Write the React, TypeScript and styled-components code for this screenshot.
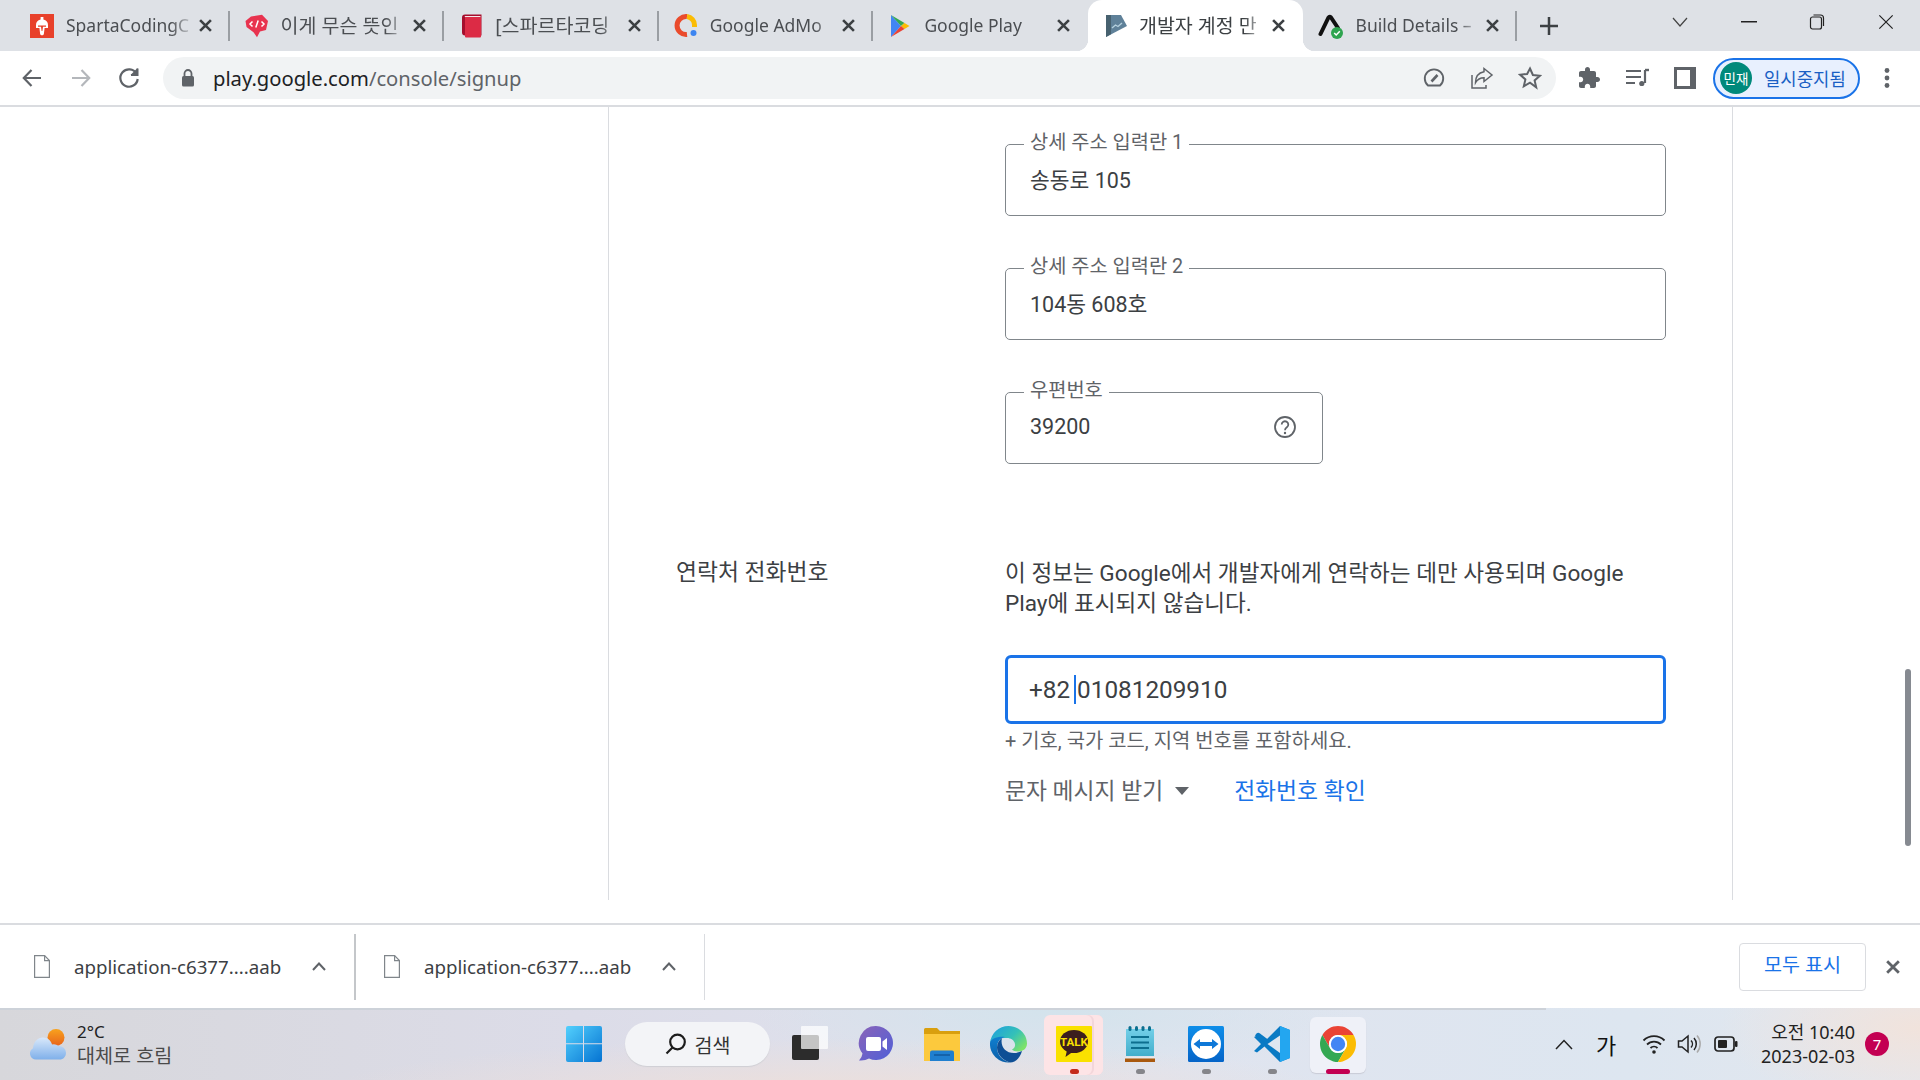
import React from "react";
import styled, { createGlobalStyle } from "styled-components";

const UI_FONT = `"Noto Sans", "Noto Sans CJK KR", sans-serif`;
const PAGE_FONT = `Roboto, "Noto Sans CJK KR", sans-serif`;

const colors = {
  strip: "#dee1e6",
  omni: "#f1f3f4",
  icon: "#5f6368",
  text: "#3c4043",
  line: "#dadce0",
  outline: "#80868b",
  blue: "#1a73e8",
};

const GlobalStyle = createGlobalStyle`
  html, body {
    margin: 0;
    padding: 0;
    background: #fff;
    overflow: hidden;
  }
  * {
    box-sizing: border-box;
  }
  svg {
    display: block;
    flex: none;
  }
`;

const Screen = styled.div`
  display: flex;
  flex-direction: column;
  width: 1920px;
  height: 1080px;
  overflow: hidden;
`;

/* tab strip */
const TabStrip = styled.div`
  display: flex;
  flex: 0 0 51px;
  padding-left: 15px;
  background: ${colors.strip};
`;

const Tab = styled.div<{ $active?: boolean }>`
  position: relative;
  display: flex;
  flex: 0 0 214.6px;
  align-items: center;
  gap: 12px;
  min-width: 0;
  padding: 0 18px 0 15px;
  background: ${(p) => (p.$active ? "#fff" : "transparent")};
  border-radius: ${(p) => (p.$active ? "14px 14px 0 0" : "0")};

  ${(p) =>
    p.$active
      ? `
    &::before, &::after {
      content: "";
      position: absolute;
      bottom: 0;
      width: 12px;
      height: 12px;
    }
    &::before {
      left: -12px;
      background: radial-gradient(circle at 0 0, transparent 12px, #fff 12.5px);
    }
    &::after {
      right: -12px;
      background: radial-gradient(circle at 100% 0, transparent 12px, #fff 12.5px);
    }
  `
      : ""}
`;

const TabSeparator = styled.span`
  position: absolute;
  top: 11px;
  right: 0;
  width: 2px;
  height: 30px;
  background: #9a9ea3;
`;

const TabTitle = styled.span<{ $active?: boolean; $korean?: boolean }>`
  flex: 1;
  min-width: 0;
  margin: -2px -4px 0 0;
  font-family: ${UI_FONT};
  font-size: ${(p) => (p.$korean ? 19.5 : 17.5)}px;
  white-space: nowrap;
  color: ${(p) => (p.$active ? "#3c4043" : "#4b4e52")};
  -webkit-mask-image: linear-gradient(to right, #000 84%, rgba(0, 0, 0, 0.15) 100%);
  mask-image: linear-gradient(to right, #000 84%, rgba(0, 0, 0, 0.15) 100%);
`;

const NewTab = styled.div`
  display: flex;
  align-items: center;
  justify-content: center;
  width: 64px;
  height: 51px;
`;

const WindowControls = styled.div`
  display: flex;
  margin-left: auto;
`;

const WindowButton = styled.div`
  display: flex;
  align-items: center;
  justify-content: center;
  width: 68.5px;
  height: 44px;
`;

/* toolbar */
const Toolbar = styled.div`
  display: flex;
  flex: 0 0 56px;
  align-items: center;
  padding: 0 0 0 8px;
  background: #fff;
  border-bottom: 2px solid ${colors.line};
`;

const ToolButton = styled.div<{ $gap?: number }>`
  display: flex;
  align-items: center;
  justify-content: center;
  width: 48px;
  height: 42px;
  margin-left: ${(p) => p.$gap ?? 0}px;
`;

const Omnibox = styled.div`
  display: flex;
  flex: 0 0 1393px;
  align-items: center;
  height: 42px;
  margin-left: 10px;
  padding: 0 2px 0 16px;
  background: ${colors.omni};
  border-radius: 21px;
`;

const Url = styled.div`
  flex: 1;
  margin-left: 16px;
  font-family: ${UI_FONT};
  font-size: 20.2px;
  color: ${colors.icon};
  b {
    font-weight: 400;
    color: #202124;
  }
`;

const ProfilePill = styled.div`
  display: flex;
  align-items: center;
  width: 147px;
  height: 41px;
  margin-left: 4px;
  padding-left: 5px;
  background: #e8f0fe;
  border: 2px solid ${colors.blue};
  border-radius: 21px;
`;

const Avatar = styled.div`
  display: flex;
  align-items: center;
  justify-content: center;
  width: 32px;
  height: 32px;
  border-radius: 50%;
  background: #00897b;
  color: #fff;
  font-family: ${UI_FONT};
  font-size: 13.5px;
  white-space: nowrap;
`;

const ProfileLabel = styled.span`
  margin-left: 12px;
  font-family: ${UI_FONT};
  font-size: 17.8px;
  white-space: nowrap;
  color: #1a5fc4;
`;

/* page */
const Content = styled.div`
  position: relative;
  display: grid;
  flex: 1;
  grid-template-columns: 608px 1125px 1fr;
  min-height: 0;
  padding-bottom: 23px;
  background: #fff;
`;

const Panel = styled.div`
  grid-column: 2;
  padding: 37px 0 0 67px;
  border-left: 1px solid ${colors.line};
  border-right: 1px solid ${colors.line};
  font-family: ${PAGE_FONT};
`;

const AddressColumn = styled.div`
  display: flex;
  flex-direction: column;
  gap: 52px;
  margin-left: 329px;
  width: 661px;
`;

const OutlinedField = styled.div<{ $width?: number }>`
  position: relative;
  display: flex;
  align-items: center;
  justify-content: space-between;
  width: ${(p) => (p.$width ? `${p.$width}px` : "100%")};
  height: 72px;
  padding: 0 25px 3px 24px;
  border: 1px solid ${colors.outline};
  border-radius: 5px;
`;

const FloatingLabel = styled.span`
  position: absolute;
  top: -14px;
  left: 18px;
  padding: 0 6px;
  background: #fff;
  font-size: 19.8px;
  line-height: 24px;
  color: ${colors.icon};
  white-space: nowrap;
`;

const FieldValue = styled.span`
  font-size: 21.5px;
  color: ${colors.text};
  white-space: nowrap;
`;

const ContactRow = styled.div`
  display: grid;
  grid-template-columns: 329px 661px;
  margin-top: 94px;
`;

const ContactLabel = styled.div`
  font-size: 22.8px;
  line-height: 30px;
  color: ${colors.text};
`;

const Description = styled.p`
  margin: 0 0 36px;
  padding-top: 1px;
  font-size: 22.6px;
  line-height: 30px;
  color: ${colors.text};
  white-space: nowrap;
`;

const PhoneField = styled.div`
  display: flex;
  align-items: center;
  height: 69px;
  padding-left: 21px;
  border: 3.5px solid ${colors.blue};
  border-radius: 6px;
  font-size: 24.3px;
  color: ${colors.text};
`;

const Caret = styled.span`
  display: inline-block;
  width: 2px;
  height: 29px;
  margin: 0 1px 0 4px;
  background: ${colors.blue};
`;

const Hint = styled.div`
  margin-top: 6px;
  font-size: 19.9px;
  line-height: 24px;
  color: ${colors.icon};
`;

const Actions = styled.div`
  display: flex;
  align-items: center;
  height: 30px;
  margin-top: 20px;
  font-size: 22.8px;
`;

const SmsSelect = styled.span`
  display: flex;
  align-items: center;
  gap: 12px;
  color: ${colors.icon};

  svg {
    margin-top: 3px;
  }
`;

const VerifyLink = styled.a`
  margin-left: 45px;
  color: ${colors.blue};
`;

const ScrollThumb = styled.div`
  position: absolute;
  top: 562px;
  right: 9px;
  width: 6px;
  height: 177px;
  border-radius: 3px;
  background: #868a91;
`;

/* download shelf */
const Shelf = styled.div`
  display: flex;
  flex: 0 0 85px;
  align-items: center;
  background: #fff;
  border-top: 2px solid ${colors.line};
`;

const DownloadItem = styled.div<{ $width: number; $strong?: boolean }>`
  display: flex;
  align-items: center;
  width: ${(p) => p.$width}px;
  height: 66px;
  padding-left: ${(p) => (p.$strong ? 34 : 28)}px;
  border-right: ${(p) => (p.$strong ? 2 : 1)}px solid ${(p) => (p.$strong ? "#c4c7ca" : colors.line)};
`;

const FileName = styled.span`
  flex: 1;
  margin-left: 24px;
  font-family: ${UI_FONT};
  font-size: 18.7px;
  color: ${colors.text};
  white-space: nowrap;
`;

const ItemCaret = styled.span`
  margin-right: 28px;
`;

const ShowAll = styled.button`
  display: flex;
  align-items: center;
  justify-content: center;
  width: 127px;
  height: 48px;
  margin-left: auto;
  padding: 0 0 6px;
  background: #fff;
  border: 1.5px solid ${colors.line};
  border-radius: 4px;
  font-family: ${UI_FONT};
  font-size: 19.6px;
  color: ${colors.blue};
`;

const ShelfClose = styled.div`
  display: flex;
  align-items: center;
  justify-content: center;
  width: 54px;
`;

/* taskbar */
const Taskbar = styled.div`
  position: relative;
  display: flex;
  flex: 0 0 72px;
  align-items: center;
  padding-right: 31px;
  background:
    radial-gradient(ellipse 520px 60px at 830px 90px, #eedfd9 0%, rgba(238, 223, 217, 0) 100%),
    radial-gradient(ellipse 300px 70px at 1050px 0, #d3e3ec 0%, rgba(211, 227, 236, 0) 100%),
    radial-gradient(ellipse 200px 80px at 1920px 20px, #f1e3dc 0%, rgba(241, 227, 220, 0) 100%),
    linear-gradient(to right, #d7d7db 0%, #dcdce8 30%, #e0e4ef 60%, #dde6f0 85%, #e3e7ee 100%);

  &::before {
    content: "";
    position: absolute;
    top: 0;
    left: 0;
    width: 1546px;
    height: 2px;
    background: #cdd2d9;
  }
`;

const Weather = styled.div`
  display: flex;
  flex: 0 0 551px;
  align-items: center;
  gap: 11px;
  padding-left: 30px;
`;

const WeatherText = styled.div`
  font-family: ${UI_FONT};
  font-size: 19.6px;
  line-height: 24px;
  color: #4a4a4a;
  white-space: nowrap;
  strong {
    display: block;
    font-size: 17px;
    font-weight: 400;
    color: #222;
  }
`;

const TaskSlot = styled.div<{ $tone?: "kakao" | "chrome" }>`
  position: relative;
  display: flex;
  flex: 0 0 66px;
  align-items: center;
  justify-content: center;
  height: 72px;

  ${(p) =>
    p.$tone === "kakao"
      ? `
    &::before {
      content: "";
      position: absolute;
      top: 7px;
      left: 3px;
      width: 59px;
      height: 60px;
      border-radius: 6px;
      background: #fde4e6;
      box-shadow: inset -9px 0 0 #fde4e6, inset -11px 0 0 #f3d6da;
    }
  `
      : ""}
  ${(p) =>
    p.$tone === "chrome"
      ? `
    &::before {
      content: "";
      position: absolute;
      top: 9px;
      left: 5px;
      width: 56px;
      height: 56px;
      border-radius: 6px;
      background: #eff1f8;
      box-shadow: 0 1px 1px #c9cbd6;
    }
  `
      : ""}

  svg {
    position: relative;
  }
`;

const RunDot = styled.span<{ $color: string; $wide?: boolean }>`
  position: absolute;
  left: 50%;
  bottom: 6px;
  width: ${(p) => (p.$wide ? 24 : 9)}px;
  height: 5px;
  margin-left: ${(p) => (p.$wide ? -12 : -4)}px;
  border-radius: 3px;
  background: ${(p) => p.$color};
`;

const SearchPill = styled.div`
  display: flex;
  flex: 0 0 145px;
  align-items: center;
  justify-content: center;
  gap: 8px;
  height: 44px;
  margin: 0 7px 0 8px;
  border-radius: 22px;
  background: #f3f4f7;
  box-shadow: 0 1px 1px #cfcfd4;
  font-family: ${UI_FONT};
  font-size: 19.5px;
  color: #333;
`;

const Tray = styled.div`
  display: flex;
  align-items: center;
  margin-left: auto;
`;

const TraySlot = styled.div<{ $width: number; $offset?: number }>`
  display: flex;
  align-items: center;
  justify-content: center;
  width: ${(p) => p.$width}px;
  margin-left: ${(p) => p.$offset ?? 0}px;
`;

const ImeGlyph = styled.span`
  font-family: "Noto Sans CJK KR", sans-serif;
  font-size: 22px;
  color: #111;
`;

const Clock = styled.div`
  width: 110px;
  font-family: ${UI_FONT};
  font-size: 18px;
  line-height: 24px;
  text-align: right;
  color: #222;
  white-space: nowrap;
`;

const Badge = styled.div`
  display: flex;
  align-items: center;
  justify-content: center;
  width: 24px;
  height: 24px;
  margin-left: 10px;
  border-radius: 50%;
  background: #c30052;
  color: #fff;
  font-family: ${UI_FONT};
  font-size: 15px;
`;

/* icons */
const CloseIcon = ({ size = 13, color = "#3c4043", width = 2.4 }: { size?: number; color?: string; width?: number }) => (
  <svg width={size} height={size} viewBox="0 0 12 12">
    <path d="M1 1l10 10M11 1L1 11" stroke={color} strokeWidth={width} fill="none" />
  </svg>
);

const SpartaIcon = () => (
  <svg width="24" height="24" viewBox="0 0 24 24">
    <rect width="24" height="24" fill="#e8412b" />
    <path d="M10.6 3h2.8v2.6c3 .5 4.6 2.7 4.6 5.4v3h-3.4l-.8 6.6-1.8 1-1.8-1-.8-6.6H6v-3c0-2.700 1.600-4.900 4.600-5.400z" fill="#fff" />
    <path d="M8 11.500h8v1.300h-3l-.6 4.200h-.8l-.6-4.200H8z" fill="#e8412b" />
  </svg>
);

const BubbleIcon = () => (
  <svg width="24" height="24" viewBox="0 0 24 24">
    <path d="M6 2.500L17 .8l6 6.200-2 9-6 1.500-3 5.700-3.500-5L1.500 13 .5 7z" fill="#e8334f" />
    <path d="M7.500 7.500L5 10l2.500 2.500M16.500 7.500L19 10l-2.500 2.500M13.200 6.500l-2.400 7" stroke="#fff" strokeWidth="1.500" fill="none" />
  </svg>
);

const BookIcon = () => (
  <svg width="24" height="24" viewBox="0 0 24 24">
    <path d="M3 3.500A3 3 0 0 1 6 .5h16.500v21H6a3 3 0 0 1-3-3z" fill="#a50e2d" />
    <path d="M5.500 2h16v1.500h-15z" fill="#fff" opacity=".9" />
    <rect x="6" y="3" width="16" height="20.500" rx="1" fill="#dc2b45" />
  </svg>
);

const AdMobIcon = () => (
  <svg width="24" height="24" viewBox="0 0 24 24" fill="none">
    <path d="M13 20.500A9 9 0 1 1 13 2.600" stroke="#ea4b2c" strokeWidth="5" />
    <path d="M13 2.600a8.500 8.500 0 0 1 7.500 8.500v2" stroke="#fbbc04" strokeWidth="5" />
    <circle cx="19.500" cy="19" r="3" fill="#3d85f0" />
  </svg>
);

const PlayIcon = () => (
  <svg width="24" height="24" viewBox="0 0 24 24">
    <path d="M3 1l10 11L3 23z" fill="#4285f4" />
    <path d="M3 1l13.500 8L13 12z" fill="#34a853" />
    <path d="M16.500 9l5 3-5 3L13 12z" fill="#fbbc04" />
    <path d="M3 23l10-11 3.500 3z" fill="#ea4335" />
  </svg>
);

const ConsoleIcon = () => (
  <svg width="24" height="24" viewBox="0 0 24 24">
    <path d="M3 1h15l6 11L3 23z" fill="#5f8199" />
    <path d="M3 1h5v19.200L3 23z" fill="#47616f" />
    <path d="M9 14l3.500-3 2.500 1.500 4-3.500" stroke="#b4cfdd" strokeWidth="1.400" fill="none" />
  </svg>
);

const ExpoIcon = () => (
  <svg width="26" height="26" viewBox="0 0 26 26">
    <path d="M2.500 21L10.500 4.500Q11.500 3 13 4.500L20 15" stroke="#111" strokeWidth="4" fill="none" strokeLinecap="round" />
    <circle cx="19" cy="20" r="6" fill="#2ea44f" />
    <path d="M16.200 20l2 2 3.600-3.800" stroke="#fff" strokeWidth="1.500" fill="none" />
  </svg>
);

const GaugeIcon = () => (
  <svg width="22" height="22" viewBox="0 0 22 22" fill="none" stroke="#5f6368" strokeWidth="1.900">
    <path d="M5 18.500a9.200 9.200 0 1 1 12 0z" />
    <path d="M8.500 14.500L14.500 8" strokeWidth="2.600" />
  </svg>
);

const ShareIcon = () => (
  <svg width="24" height="24" viewBox="0 0 24 24" fill="none" stroke="#5f6368" strokeWidth="1.500">
    <path d="M2 9v13h14v-3" />
    <path d="M14 2.500l8 6.500-8 6.500v-3.800c-4 0-6.500 1.500-8.500 5 0-6 3-10 8.500-11z" />
  </svg>
);

const StarIcon = () => (
  <svg width="24" height="24" viewBox="0 0 24 24" fill="none" stroke="#5f6368" strokeWidth="2">
    <path d="M12 2.500l2.900 6.500 7 .7-5.300 4.700 1.600 6.900L12 16.700l-6.200 3.600 1.600-6.900-5.300-4.700 7-.7z" />
  </svg>
);

const PuzzleIcon = () => (
  <svg width="24" height="24" viewBox="0 0 24 24">
    <path
      d="M20.500 11H19V7c0-1.100-.9-2-2-2h-4V3.500C13 2.120 11.880 1 10.500 1S8 2.120 8 3.500V5H4c-1.100 0-1.990.9-1.990 2v3.800H3.500c1.490 0 2.700 1.210 2.700 2.700s-1.210 2.700-2.700 2.700H2V20c0 1.100.9 2 2 2h3.800v-1.500c0-1.490 1.210-2.700 2.700-2.700 1.490 0 2.700 1.210 2.700 2.700V22H17c1.100 0 2-.9 2-2v-4h1.500c1.380 0 2.500-1.120 2.500-2.500S21.880 11 20.500 11z"
      fill="#5f6368"
    />
  </svg>
);

const QueueIcon = () => (
  <svg width="24" height="22" viewBox="0 0 24 22" fill="none" stroke="#5f6368" strokeWidth="2">
    <path d="M1 4h15M1 10h15M1 16h9" />
    <path d="M20 3v13" strokeWidth="2.200" />
    <path d="M20 3h4" strokeWidth="2.400" />
    <circle cx="16.800" cy="16.500" r="2.600" fill="#5f6368" stroke="none" />
  </svg>
);

const SidePanelIcon = () => (
  <svg width="22" height="22" viewBox="0 0 22 22">
    <rect width="22" height="22" fill="#5f6368" />
    <rect x="3" y="3" width="13" height="16" fill="#fff" />
  </svg>
);

const LockIcon = () => (
  <svg width="18" height="20" viewBox="0 0 18 20">
    <path d="M5.500 8V5.500a3.500 3.500 0 0 1 7 0V8" stroke="#5f6368" strokeWidth="1.800" fill="none" />
    <rect x="3" y="8" width="12" height="10.500" rx="1.500" fill="#5f6368" />
  </svg>
);

const DotsIcon = () => (
  <svg width="6" height="22" viewBox="0 0 6 22" fill="#5f6368">
    <circle cx="3" cy="3.500" r="2.400" />
    <circle cx="3" cy="11" r="2.400" />
    <circle cx="3" cy="18.500" r="2.400" />
  </svg>
);

const ArrowIcon = ({ flip, color }: { flip?: boolean; color: string }) => (
  <svg width="22" height="22" viewBox="0 0 22 22" fill="none" stroke={color} strokeWidth="2.200" style={flip ? { transform: "scaleX(-1)" } : undefined}>
    <path d="M20 11H3M10.500 3L2.800 11l7.700 8" />
  </svg>
);

const ReloadIcon = () => (
  <svg width="22" height="22" viewBox="0 0 22 22" fill="none" stroke="#5f6368" strokeWidth="2.200">
    <path d="M18.500 6.500A8.700 8.700 0 1 0 19.700 12" />
    <path d="M19.500 1v7h-7" fill="#5f6368" strokeWidth="0" />
    <path d="M19.500 1.500v6.500H13" strokeWidth="2" />
  </svg>
);

const HelpIcon = () => (
  <svg width="24" height="24" viewBox="0 0 24 24" fill="none" stroke="#5f6368" strokeWidth="1.800">
    <circle cx="12" cy="12" r="10" />
    <path d="M8.700 9.600a3.300 3.300 0 1 1 5.200 2.700c-1.200.9-1.900 1.400-1.900 2.900" />
    <circle cx="12" cy="18" r="1.200" fill="#5f6368" stroke="none" />
  </svg>
);

const FileIcon = () => (
  <svg width="16" height="23" viewBox="0 0 16 23" fill="#fff" stroke="#80868b" strokeWidth="1.200">
    <path d="M.6.6h10l4.800 5v16.800H.6z" />
    <path d="M10.600.6v5h4.800" fill="none" />
  </svg>
);

const ChevronUpIcon = () => (
  <svg width="14" height="9" viewBox="0 0 14 9" fill="none" stroke="#5f6368" strokeWidth="2">
    <path d="M1 8l6-6.500L13 8" />
  </svg>
);

const WinLogo = () => (
  <svg width="36" height="36" viewBox="0 0 36 36">
    <defs>
      <linearGradient id="win" x1="0" y1="0" x2="1" y2="1">
        <stop offset="0" stopColor="#53d0fd" />
        <stop offset="1" stopColor="#0573d2" />
      </linearGradient>
    </defs>
    <path d="M2 0h15v17.300H0V2a2 2 0 0 1 2-2zM18 0h16a2 2 0 0 1 2 2v15.300H18zM0 18.300h17V36H2a2 2 0 0 1-2-2zM18 18.300h18V34a2 2 0 0 1-2 2H18z" fill="url(#win)" />
  </svg>
);

const SearchIcon = () => (
  <svg width="22" height="22" viewBox="0 0 22 22" fill="none" stroke="#1c1c1c" strokeWidth="2.200">
    <circle cx="12.500" cy="9" r="7.300" />
    <path d="M7.500 14.500L1.500 20.500" />
  </svg>
);

const TaskViewIcon = () => (
  <svg width="36" height="36" viewBox="0 0 36 36">
    <rect x="0" y="9" width="27" height="25" rx="2" fill="#2c2c2c" />
    <rect x="9" y="0" width="27" height="23" rx="1" fill="#fff" opacity=".72" />
  </svg>
);

const TeamsIcon = () => (
  <svg width="36" height="36" viewBox="0 0 36 36">
    <defs>
      <linearGradient id="teams" x1="0" y1="0" x2="1" y2="1">
        <stop offset="0" stopColor="#8a63b8" />
        <stop offset="1" stopColor="#5060d8" />
      </linearGradient>
    </defs>
    <path d="M18 0a17 17 0 1 1-7 32.500Q7 35 1 34.500q3-3 3.500-7A17 17 0 0 1 18 0z" fill="url(#teams)" />
    <rect x="8" y="11" width="15" height="14" rx="2" fill="#fff" />
    <path d="M24.500 15.500L29 12v12l-4.500-3.500z" fill="#fff" />
  </svg>
);

const FolderIcon = () => (
  <svg width="36" height="33" viewBox="0 0 36 33">
    <path d="M0 1.500A1.500 1.500 0 0 1 1.500 0H13l3 3h20v6H0z" fill="#d99f0e" />
    <path d="M0 6h36v27H0z" fill="#fcc93d" />
    <path d="M6 33V24.500a2 2 0 0 1 2-2h20a2 2 0 0 1 2 2V33z" fill="#1f7fcf" />
    <path d="M10 27h16" stroke="#0f4f8f" strokeWidth="1.200" />
  </svg>
);

const EdgeIcon = () => (
  <svg width="37" height="37" viewBox="0 0 37 37">
    <defs>
      <linearGradient id="edgeA" x1="0" y1="0" x2="1" y2=".7">
        <stop offset="0" stopColor="#1b9de2" />
        <stop offset=".6" stopColor="#35c1b7" />
        <stop offset="1" stopColor="#7de26a" />
      </linearGradient>
      <linearGradient id="edgeB" x1="0" y1="0" x2="0" y2="1">
        <stop offset="0" stopColor="#0f7fd0" />
        <stop offset="1" stopColor="#0c5fa8" />
      </linearGradient>
    </defs>
    <path d="M18.500 0C29 0 37 8 37 17.500c0 5-4 8-9 8-3 0-5-.8-6-2 2-1 3.500-3 3-5.500-.7-4-4.300-6-8-6C9 12 1 13 0 17 1 7 9 0 18.500 0z" fill="url(#edgeA)" />
    <path d="M0 17c0-4 8-7 15-6-5 1-8 5-8 10.500 0 7 5 13 13 15A18.500 18.500 0 0 1 0 17z" fill="url(#edgeB)" />
    <path d="M20 36.500c-7-2-13-8-13-15 0-4 2-7.500 5-9.500-2 8 3 15 12 15 3 0 6-1 8-2-2 7-6 11-12 11.500z" fill="#0e4f95" />
  </svg>
);

const KakaoIcon = () => (
  <svg width="36" height="36" viewBox="0 0 36 36">
    <rect width="36" height="36" rx="1" fill="#fae100" />
    <ellipse cx="18" cy="15.500" rx="14" ry="11.500" fill="#3c1e1e" />
    <path d="M11 24l-1.500 7 7-5z" fill="#3c1e1e" />
    <text x="18" y="20" textAnchor="middle" fontFamily="Roboto, sans-serif" fontWeight="700" fontSize="11.500" fill="#fae100">
      TALK
    </text>
  </svg>
);

const NotesIcon = () => (
  <svg width="30" height="36" viewBox="0 0 30 36">
    <defs>
      <linearGradient id="notes" x1="0" y1="0" x2="0" y2="1">
        <stop offset="0" stopColor="#72cfe8" />
        <stop offset="1" stopColor="#42aecb" />
      </linearGradient>
    </defs>
    <path d="M1 3h28v27H1z" fill="url(#notes)" />
    <path d="M0 32h30v4H0z" fill="#a9590f" />
    <path d="M0 31h30v1.500H0z" fill="#e9e9e9" />
    <path d="M6 11h18M6 16.500h18M6 22h18" stroke="#0c6f8f" strokeWidth="1.900" />
    <g fill="#0c6f8f">
      <rect x="3.500" y="0" width="3" height="5" rx="1.500" />
      <rect x="10" y="0" width="3" height="5" rx="1.500" />
      <rect x="16.500" y="0" width="3" height="5" rx="1.500" />
      <rect x="23" y="0" width="3" height="5" rx="1.500" />
    </g>
  </svg>
);

const TeamViewerIcon = () => (
  <svg width="36" height="36" viewBox="0 0 36 36">
    <defs>
      <linearGradient id="tv" x1="0" y1="0" x2="0" y2="1">
        <stop offset="0" stopColor="#0e8ee9" />
        <stop offset="1" stopColor="#0564c8" />
      </linearGradient>
    </defs>
    <rect width="36" height="36" rx="1.500" fill="url(#tv)" />
    <circle cx="18" cy="18" r="15" fill="#fff" />
    <path d="M5.500 18l6.500-5v3h12v-3l6.500 5-6.500 5v-3H12v3z" fill="#0e78d8" />
  </svg>
);

const VscodeIcon = () => (
  <svg width="36" height="36" viewBox="0 0 36 36">
    <path d="M26 0L10.500 15.500 3 9.500 0 11l7 7-7 7 3 1.500 7.500-6L26 36l10-4V4z" fill="#0a7ac4" />
    <path d="M26 0l10 4v28l-10 4z" fill="#23a6f0" />
    <path d="M1 9.500l25 19v-5.800L6 7.500a2.500 2.500 0 0 0-3.500 0z" fill="#0a7ac4" />
    <path d="M26 9.500L13.500 18 26 27z" fill="#dfe6f0" />
  </svg>
);

const ChromeIcon = () => (
  <svg width="36" height="36" viewBox="2 2 44 44">
    <path d="M4.950 13A22 22 0 0 1 43.050 13H24A11 11 0 0 0 14.470 29.500z" fill="#ea4335" />
    <path d="M4.950 13A22 22 0 0 0 24 46L33.530 29.500A11 11 0 0 1 14.470 29.500z" fill="#34a853" />
    <path d="M43.050 13A22 22 0 0 1 24 46L33.530 29.500A11 11 0 0 0 24 13z" fill="#fbbc04" />
    <circle cx="24" cy="24" r="11" fill="#fff" />
    <circle cx="24" cy="24" r="8.800" fill="#4285f4" />
  </svg>
);

const WeatherIcon = () => (
  <svg width="36" height="31" viewBox="0 0 36 31">
    <defs>
      <linearGradient id="cloud" x1="0" y1="0" x2="0" y2="1">
        <stop offset="0" stopColor="#d9e8fa" />
        <stop offset="1" stopColor="#7fb0ea" />
      </linearGradient>
      <linearGradient id="sun" x1="0" y1="0" x2="0" y2="1">
        <stop offset="0" stopColor="#f8a21d" />
        <stop offset="1" stopColor="#e8641c" />
      </linearGradient>
    </defs>
    <circle cx="26" cy="8.500" r="8.500" fill="url(#sun)" />
    <path d="M6 30.500a6 6 0 0 1-3-11.200C3.500 13 7.500 8.500 13 8.500c4.500 0 8 2.800 9 7a7.500 7.500 0 0 1 6.500 1.500 7 7 0 0 1 7.500 6.700c0 3.800-2.500 6.800-6.500 6.800z" fill="url(#cloud)" />
  </svg>
);

const WifiIcon = () => (
  <svg width="24" height="22" viewBox="0 0 24 22" fill="none" stroke="#222" strokeWidth="1.800">
    <path d="M1.500 7.500a15 15 0 0 1 21 0M5 11.500a10 10 0 0 1 14 0M8.500 15a5 5 0 0 1 7 0" />
    <circle cx="12" cy="19" r="1.800" fill="#222" stroke="none" />
  </svg>
);

const VolumeIcon = () => (
  <svg width="24" height="24" viewBox="0 0 24 24" fill="none" stroke="#222" strokeWidth="1.500">
    <path d="M1.500 9H5l6-5v16l-6-5H1.500z" />
    <path d="M14 8.500a5 5 0 0 1 0 7" />
    <path d="M17 6a9 9 0 0 1 0 12" />
    <path d="M20 3.500a13 13 0 0 1 0 17" stroke="#aaa" />
  </svg>
);

const BatteryIcon = () => (
  <svg width="24" height="16" viewBox="0 0 24 16">
    <rect x="1" y="1" width="19" height="14" rx="3" fill="none" stroke="#222" strokeWidth="1.700" />
    <rect x="4" y="4" width="9" height="8" rx="1" fill="#222" />
    <rect x="21" y="5" width="2.500" height="6" rx="1" fill="#222" />
  </svg>
);

const tabs = [
  { title: "SpartaCodingC", icon: <SpartaIcon /> },
  { title: "이게 무슨 뜻인", icon: <BubbleIcon />, korean: true },
  { title: "[스파르타코딩", icon: <BookIcon />, korean: true },
  { title: "Google AdMo", icon: <AdMobIcon /> },
  { title: "Google Play", icon: <PlayIcon /> },
  { title: "개발자 계정 만", icon: <ConsoleIcon />, korean: true, active: true },
  { title: "Build Details –", icon: <ExpoIcon /> },
];

const taskApps = [
  { key: "task", icon: <TaskViewIcon /> },
  { key: "teams", icon: <TeamsIcon /> },
  { key: "folder", icon: <FolderIcon /> },
  { key: "edge", icon: <EdgeIcon /> },
  { key: "kakao", icon: <KakaoIcon />, tone: "kakao" as const, dot: "#c42b1c" },
  { key: "notes", icon: <NotesIcon />, dot: "#85858a" },
  { key: "teamviewer", icon: <TeamViewerIcon />, dot: "#85858a" },
  { key: "vscode", icon: <VscodeIcon />, dot: "#85858a" },
  { key: "chrome", icon: <ChromeIcon />, tone: "chrome" as const, dot: "#c30052", wide: true },
];

const App = () => {
  return (
    <Screen>
      <GlobalStyle />
      <TabStrip>
        {tabs.map((tab, i) => (
          <Tab key={tab.title} $active={tab.active}>
            {tab.icon}
            <TabTitle $active={tab.active} $korean={tab.korean}>
              {tab.title}
            </TabTitle>
            <CloseIcon />
            {!tab.active && i !== 4 && <TabSeparator />}
          </Tab>
        ))}
        <NewTab>
          <svg width="20" height="20" viewBox="0 0 20 20">
            <path d="M10 1v18M1 10h18" stroke="#3c4043" strokeWidth="2.500" />
          </svg>
        </NewTab>
        <WindowControls>
          <WindowButton>
            <svg width="16" height="10" viewBox="0 0 16 10" fill="none" stroke="#444" strokeWidth="1.200">
              <path d="M1 1l7 8 7-8" />
            </svg>
          </WindowButton>
          <WindowButton>
            <svg width="16" height="2" viewBox="0 0 16 2">
              <rect width="16" height="1.500" fill="#222" />
            </svg>
          </WindowButton>
          <WindowButton>
            <svg width="16" height="16" viewBox="0 0 16 16" fill="none" stroke="#222" strokeWidth="1.200">
              <rect x="1.500" y="3" width="11" height="12" rx="2" />
              <path d="M4.500 1h7a3 3 0 0 1 3 3v8" />
            </svg>
          </WindowButton>
          <WindowButton>
            <CloseIcon size={16} color="#222" width={0.9} />
          </WindowButton>
        </WindowControls>
      </TabStrip>

      <Toolbar>
        <ToolButton>
          <ArrowIcon color="#5f6368" />
        </ToolButton>
        <ToolButton $gap={1}>
          <ArrowIcon flip color="#b4b7bb" />
        </ToolButton>
        <ToolButton>
          <ReloadIcon />
        </ToolButton>
        <Omnibox>
          <LockIcon />
          <Url>
            <b>play.google.com</b>/console/signup
          </Url>
          <ToolButton>
            <GaugeIcon />
          </ToolButton>
          <ToolButton>
            <ShareIcon />
          </ToolButton>
          <ToolButton>
            <StarIcon />
          </ToolButton>
        </Omnibox>
        <ToolButton $gap={9}>
          <PuzzleIcon />
        </ToolButton>
        <ToolButton>
          <QueueIcon />
        </ToolButton>
        <ToolButton>
          <SidePanelIcon />
        </ToolButton>
        <ProfilePill>
          <Avatar>민재</Avatar>
          <ProfileLabel>일시중지됨</ProfileLabel>
        </ProfilePill>
        <ToolButton $gap={3}>
          <DotsIcon />
        </ToolButton>
      </Toolbar>

      <Content>
        <Panel>
          <AddressColumn>
            <OutlinedField>
              <FloatingLabel>상세 주소 입력란 1</FloatingLabel>
              <FieldValue>송동로 105</FieldValue>
            </OutlinedField>
            <OutlinedField>
              <FloatingLabel>상세 주소 입력란 2</FloatingLabel>
              <FieldValue>104동 608호</FieldValue>
            </OutlinedField>
            <OutlinedField $width={318}>
              <FloatingLabel>우편번호</FloatingLabel>
              <FieldValue>39200</FieldValue>
              <HelpIcon />
            </OutlinedField>
          </AddressColumn>
          <ContactRow>
            <ContactLabel>연락처 전화번호</ContactLabel>
            <div>
              <Description>
                이 정보는 Google에서 개발자에게 연락하는 데만 사용되며 Google
                <br />
                Play에 표시되지 않습니다.
              </Description>
              <PhoneField>
                +82
                <Caret />
                01081209910
              </PhoneField>
              <Hint>+ 기호, 국가 코드, 지역 번호를 포함하세요.</Hint>
              <Actions>
                <SmsSelect>
                  문자 메시지 받기
                  <svg width="14" height="8" viewBox="0 0 14 8">
                    <path d="M0 0h14L7 8z" fill="#5f6368" />
                  </svg>
                </SmsSelect>
                <VerifyLink>전화번호 확인</VerifyLink>
              </Actions>
            </div>
          </ContactRow>
        </Panel>
        <ScrollThumb />
      </Content>

      <Shelf>
        <DownloadItem $width={356} $strong>
          <FileIcon />
          <FileName>application-c6377....aab</FileName>
          <ItemCaret>
            <ChevronUpIcon />
          </ItemCaret>
        </DownloadItem>
        <DownloadItem $width={349}>
          <FileIcon />
          <FileName>application-c6377....aab</FileName>
          <ItemCaret>
            <ChevronUpIcon />
          </ItemCaret>
        </DownloadItem>
        <ShowAll>모두 표시</ShowAll>
        <ShelfClose>
          <CloseIcon size={14} color="#5f6368" />
        </ShelfClose>
      </Shelf>

      <Taskbar>
        <Weather>
          <WeatherIcon />
          <WeatherText>
            <strong>2°C</strong>
            대체로 흐림
          </WeatherText>
        </Weather>
        <TaskSlot>
          <WinLogo />
        </TaskSlot>
        <SearchPill>
          <SearchIcon />
          검색
        </SearchPill>
        {taskApps.map((app) => (
          <TaskSlot key={app.key} $tone={app.tone}>
            {app.icon}
            {app.dot && <RunDot $color={app.dot} $wide={app.wide} />}
          </TaskSlot>
        ))}
        <Tray>
          <TraySlot $width={42}>
            <svg width="18" height="11" viewBox="0 0 18 11" fill="none" stroke="#222" strokeWidth="1.500">
              <path d="M1 10l8-8.500L17 10" />
            </svg>
          </TraySlot>
          <TraySlot $width={42}>
            <ImeGlyph>가</ImeGlyph>
          </TraySlot>
          <TraySlot $width={34} $offset={10}>
            <WifiIcon />
          </TraySlot>
          <TraySlot $width={36}>
            <VolumeIcon />
          </TraySlot>
          <TraySlot $width={38}>
            <BatteryIcon />
          </TraySlot>
          <Clock>
            오전 10:40
            <br />
            2023-02-03
          </Clock>
          <Badge>7</Badge>
        </Tray>
      </Taskbar>
    </Screen>
  );
};

export default App;
